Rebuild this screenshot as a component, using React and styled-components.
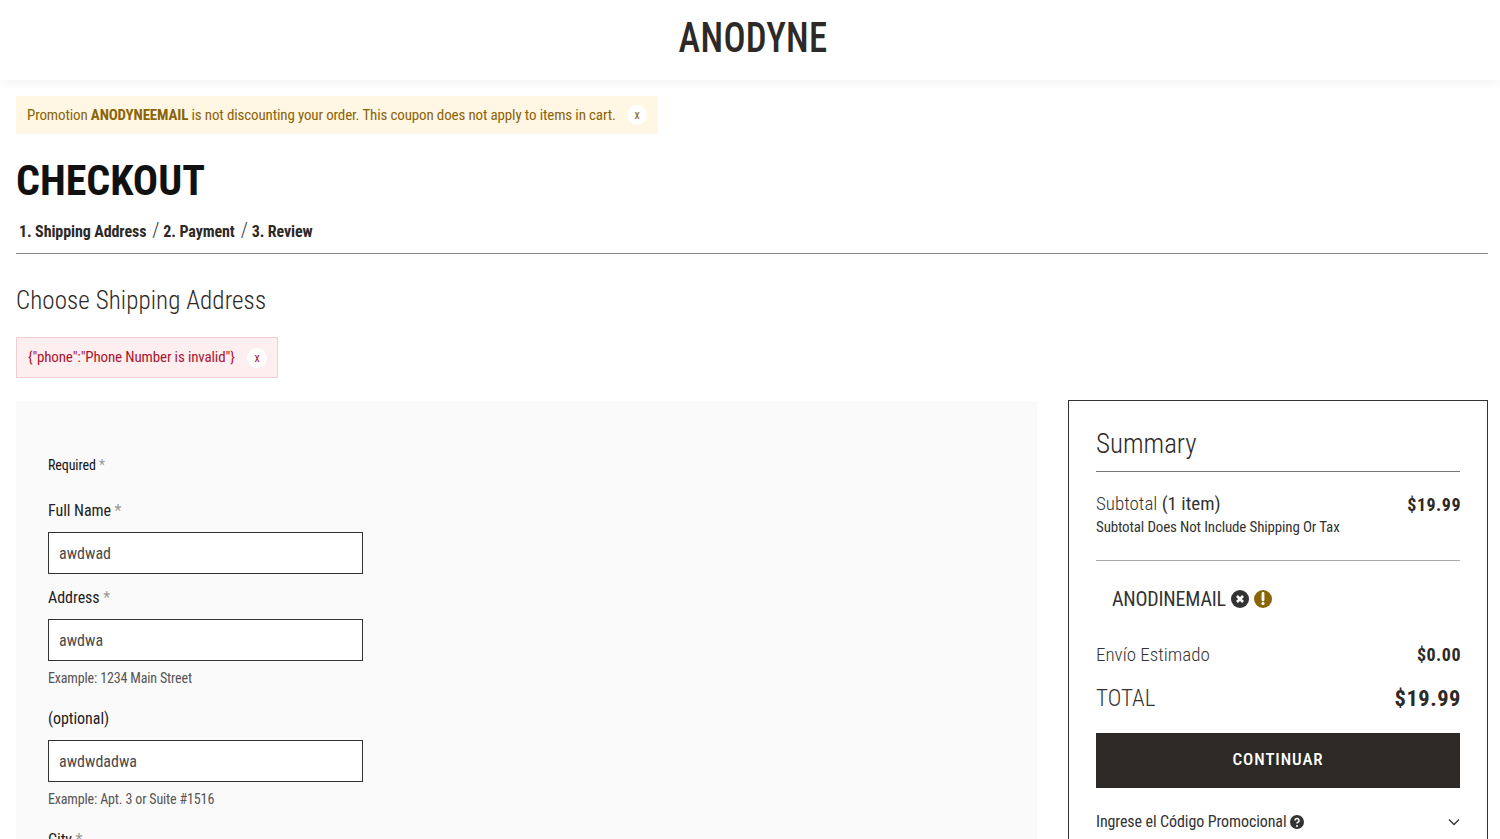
import React from "react";
import styled, { createGlobalStyle } from "styled-components";

const Global = createGlobalStyle`
  html, body { margin: 0; padding: 0; background: #fff; height: 839px; overflow: hidden; }
  body { font-family: Roboto, "Liberation Sans", sans-serif; font-stretch: 75%; color: #2d2926; }
  * { box-sizing: border-box; }
`;

const Header = styled.header`
  height: 80px;
  display: flex;
  align-items: center;
  justify-content: center;
  background: #fff;
  box-shadow: 0 2px 12px rgba(0, 0, 0, 0.06);
  padding: 0 0 4px 6px;
`;
const Logo = styled.div`
  font-size: 42px;
  line-height: 1;
  font-weight: 500;
  letter-spacing: 0.3px;
  color: #2d2926;
  transform: scaleX(0.875);
`;
const Main = styled.main`
  padding: 16px 12px 0 16px;
`;
const Alert = styled.div`
  display: flex;
  align-items: center;
  font-size: 15px;
  letter-spacing: -0.14px;
  background: ${(p) => (p.$kind === "error" ? "#fdeef0" : "#fff6e3")};
  color: ${(p) => (p.$kind === "error" ? "#a9162f" : "#8a6408")};
  border: 1px solid ${(p) => (p.$kind === "error" ? "#f6ccd3" : "#fff6e3")};
  height: ${(p) => (p.$kind === "error" ? "41px" : "38px")};
  width: ${(p) => (p.$kind === "error" ? "262px" : "642px")};
  padding: 0 0 ${(p) => (p.$kind === "error" ? "2px" : "0")} ${(p) => (p.$kind === "error" ? "11px" : "10px")};
  position: relative;
  b { font-weight: 700; }
`;
const Close = styled.span`
  position: absolute;
  right: 10px;
  top: 50%;
  margin-top: -10px;
  width: 20px;
  height: 20px;
  border-radius: 50%;
  background: #fff;
  font-size: 12px;
  font-weight: 400;
  display: flex;
  align-items: center;
  justify-content: center;
`;
const Title = styled.h1`
  margin: 24px 0 0;
  font-size: 42px;
  line-height: 46px;
  font-weight: 700;
  color: #111;
`;
const Steps = styled.div`
  margin-top: 14px;
  padding-left: 3px;
  font-size: 16px;
  letter-spacing: -0.1px;
  font-weight: 700;
  color: #2d2926;
  border-bottom: 1px solid #8b8b8b;
  height: 36px;
`;
const Slash = styled.span`
  font-weight: 300;
  font-size: 20px;
  margin: 0 4px 0 6px;
`;
const Subtitle = styled.h2`
  margin: 32px 0 21px;
  font-size: 25px;
  letter-spacing: 0.1px;
  line-height: 30px;
  font-weight: 300;
  color: #2d2926;
`;
const Columns = styled.div`
  display: grid;
  grid-template-columns: 1021px 420px;
  justify-content: space-between;
  margin-top: 23px;
`;
const FormPanel = styled.section`
  background: #fafafa;
  padding: 54px 32px 0;
  height: 600px;
`;
const Required = styled.div`
  font-size: 14px;
  letter-spacing: -0.1px;
  line-height: 20px;
  color: #111;
`;
const Star = styled.span`
  color: #999;
`;
const Field = styled.div`
  margin-top: ${(p) => p.$top}px;
`;
const Label = styled.label`
  display: block;
  font-size: 16px;
  letter-spacing: -0.05px;
  line-height: 20px;
  color: #222;
`;
const Input = styled.div`
  width: 315px;
  height: 42px;
  margin-top: 11px;
  border: 1px solid #333;
  background: #fff;
  display: flex;
  align-items: center;
  padding-left: 10px;
  font-size: 16px;
  color: #4a4a4a;
`;
const Hint = styled.div`
  margin-top: 9px;
  font-size: 14px;
  letter-spacing: -0.15px;
  line-height: 17px;
  color: #555;
`;
const Summary = styled.aside`
  border: 1px solid #333;
  margin-top: -1px;
  padding: 24px 27px 0;
  height: 601px;
`;
const SummaryTitle = styled.div`
  font-size: 27px;
  line-height: 38px;
  font-weight: 300;
  color: #2d2926;
  padding-bottom: 8px;
  border-bottom: 1px solid #777;
`;
const Row = styled.div`
  display: flex;
  justify-content: space-between;
  align-items: center;
  margin-top: ${(p) => p.$top}px;
`;
const RowLabel = styled.span`
  font-size: ${(p) => p.$size}px;
  line-height: 1.2;
  font-weight: 300;
  color: #333;
`;
const Strong = styled.span`
  font-weight: 400;
`;
const Amount = styled.span`
  font-size: ${(p) => p.$size}px;
  line-height: 1.2;
  font-weight: 700;
  letter-spacing: 0.5px;
  margin-right: -1px;
  color: #2d2926;
`;
const Note = styled.div`
  font-size: 15px;
  letter-spacing: -0.15px;
  line-height: 18px;
  margin-top: 2px;
  color: #333;
`;
const Divider = styled.div`
  border-top: 1px solid #aaa;
  margin-top: 24px;
`;
const Coupon = styled.div`
  display: flex;
  align-items: center;
  gap: 5px;
  margin-top: 25px;
  padding-left: 16px;
  font-size: 20px;
  letter-spacing: -0.2px;
  line-height: 26px;
  color: #333;
`;
const Continue = styled.button`
  display: block;
  width: 100%;
  height: 55px;
  margin-top: 21px;
  padding: 0 0 3px;
  border: 0;
  background: #2d2926;
  color: #fff;
  font: 500 17px Roboto, sans-serif;
  font-stretch: 75%;
  letter-spacing: 0.9px;
`;
const Promo = styled.div`
  display: flex;
  justify-content: space-between;
  align-items: center;
  margin-top: 24px;
  font-size: 16px;
  letter-spacing: -0.1px;
  color: #333;
`;
const PromoLeft = styled.span`
  display: flex;
  align-items: center;
  gap: 4px;
`;
const Chevron = styled.svg`
  margin-right: -1px;
`;

const Circle = ({ color, size = 18, children }) => (
  <svg width={size} height={size} viewBox="0 0 18 18">
    <circle cx="9" cy="9" r="9" fill={color} />
    {children}
  </svg>
);

export default function App() {
  return (
    <>
      <Global />
      <Header><Logo>ANODYNE</Logo></Header>
      <Main>
        <Alert>
          <span>Promotion <b>ANODYNEEMAIL</b> is not discounting your order. This coupon does not apply to items in cart.</span>
          <Close>x</Close>
        </Alert>
        <Title>CHECKOUT</Title>
        <Steps>1. Shipping Address<Slash>/</Slash>2. Payment<Slash>/</Slash>3. Review</Steps>
        <Subtitle>Choose Shipping Address</Subtitle>
        <Alert $kind="error">
          <span>{'{"phone":"Phone Number is invalid"}'}</span>
          <Close>x</Close>
        </Alert>
        <Columns>
          <FormPanel>
            <Required>Required <Star>*</Star></Required>
            <Field $top={26}>
              <Label>Full Name <Star>*</Star></Label>
              <Input>awdwad</Input>
            </Field>
            <Field $top={14}>
              <Label>Address <Star>*</Star></Label>
              <Input>awdwa</Input>
              <Hint>Example: 1234 Main Street</Hint>
            </Field>
            <Field $top={22}>
              <Label>(optional)</Label>
              <Input>awdwdadwa</Input>
              <Hint>Example: Apt. 3 or Suite #1516</Hint>
            </Field>
            <Field $top={22}>
              <Label>City <Star>*</Star></Label>
            </Field>
          </FormPanel>
          <Summary>
            <SummaryTitle>Summary</SummaryTitle>
            <Row $top={21}>
              <RowLabel $size={19}>Subtotal <Strong>(1 item)</Strong></RowLabel>
              <Amount $size={18}>$19.99</Amount>
            </Row>
            <Note>Subtotal Does Not Include Shipping Or Tax</Note>
            <Divider />
            <Coupon>
              ANODINEMAIL
              <Circle color="#333">
                <path d="M6 6l6 6M12 6l-6 6" stroke="#fff" strokeWidth="2.6" />
              </Circle>
              <Circle color="#8a6408">
                <path d="M9 3.5v6.5" stroke="#fff" strokeWidth="2.8" strokeLinecap="round" />
                <circle cx="9" cy="13.5" r="1.6" fill="#fff" />
              </Circle>
            </Coupon>
            <Row $top={32}>
              <RowLabel $size={19}>Envío Estimado</RowLabel>
              <Amount $size={18}>$0.00</Amount>
            </Row>
            <Row $top={18}>
              <RowLabel $size={23}>TOTAL</RowLabel>
              <Amount $size={22.5}>$19.99</Amount>
            </Row>
            <Continue>CONTINUAR</Continue>
            <Promo>
              <PromoLeft>
                Ingrese el Código Promocional
                <Circle color="#333" size={14}>
                  <path d="M6.4 7a2.6 2.6 0 1 1 3.6 2.4c-.7.3-1 .7-1 1.6" fill="none" stroke="#fff" strokeWidth="2" />
                  <circle cx="9" cy="14" r="1.3" fill="#fff" />
                </Circle>
              </PromoLeft>
              <Chevron width="14" height="14" viewBox="0 0 14 14"><path d="M2 4.5l5 5 5-5" fill="none" stroke="#333" strokeWidth="1.3" /></Chevron>
            </Promo>
          </Summary>
        </Columns>
      </Main>
    </>
  );
}
